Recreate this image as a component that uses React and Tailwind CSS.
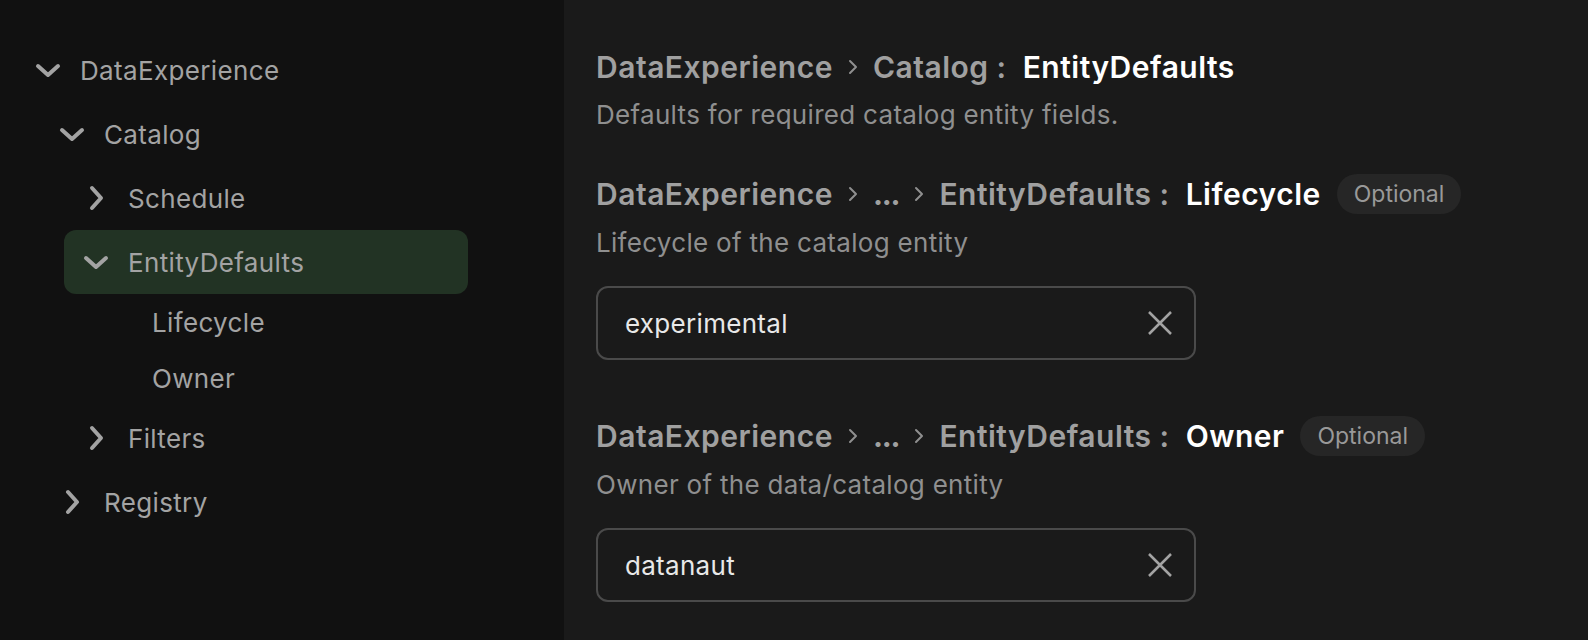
import React from 'react';

const ChevronDown = () => (
  <svg width="32" height="32" viewBox="0 0 32 32" fill="none" stroke="currentColor" strokeWidth="4" strokeLinecap="round" strokeLinejoin="round" className="shrink-0">
    <path d="M6 12 L16 21 L26 12" />
  </svg>
);

const ChevronRight = () => (
  <svg width="32" height="32" viewBox="0 0 32 32" fill="none" stroke="currentColor" strokeWidth="4" strokeLinecap="round" strokeLinejoin="round" className="shrink-0">
    <path d="M12 6 L21 16 L12 26" />
  </svg>
);

const Sep = () => (
  <svg width="40" height="32" viewBox="0 0 40 32" fill="none" stroke="#8f8f8f" strokeWidth="2" strokeLinecap="round" strokeLinejoin="round" className="shrink-0">
    <path d="M17 10 L23 16 L17 22" />
  </svg>
);

function Title({ name, parts, optional }) {
  return (
    <div className="flex items-center h-10 text-[30px] font-semibold tracking-[0.5px]">
      <span className="text-[#a0a0a0]">DataExperience</span>
      {parts.map((p) => (
        <React.Fragment key={p}>
          <Sep />
          <span className={p === '...' ? 'text-[#a0a0a0] font-bold tracking-[-1.2px]' : 'text-[#a0a0a0]'}>{p}</span>
        </React.Fragment>
      ))}
      <span className="text-[#a0a0a0] ml-2">:</span>
      <span className="text-white ml-4">{name}</span>
      {optional && (
        <span className="ml-4 h-10 px-[17px] flex items-center rounded-full bg-[#262626] text-[#999999] text-[23px] font-normal tracking-normal">
          Optional
        </span>
      )}
    </div>
  );
}

function Field({ value }) {
  return (
    <div className="mt-[27px] w-[600px] h-[74px] flex items-center justify-between pl-[27px] pr-[21px] rounded-xl border-2 border-[#4a4a4a] text-[26px] tracking-[0.3px] text-[#e8e8e8]">
      <span>{value}</span>
      <svg width="26" height="26" viewBox="0 0 26 26" fill="none" stroke="#a3a3a3" strokeWidth="2.5">
        <path d="M2 2 L24 24 M24 2 L2 24" />
      </svg>
    </div>
  );
}

export default function App() {
  return (
    <div className="flex w-[1588px] h-[640px] overflow-hidden bg-[#1a1a1a] text-[#a3a3a3] font-['Inter',sans-serif]">
      <div className="w-[564px] shrink-0 bg-[#111111] pt-[38px] text-[26px] tracking-[0.35px]">
        <div className="h-16 flex items-center gap-4 pl-8">
          <ChevronDown />
          <span>DataExperience</span>
        </div>
        <div className="h-16 flex items-center gap-4 pl-14">
          <ChevronDown />
          <span>Catalog</span>
        </div>
        <div className="h-16 flex items-center gap-4 pl-20">
          <ChevronRight />
          <span>Schedule</span>
        </div>
        <div className="h-16 ml-16 w-[404px] flex items-center gap-4 pl-4 rounded-xl bg-[#223324]">
          <ChevronDown />
          <span>EntityDefaults</span>
        </div>
        <div className="h-14 flex items-center pl-[152px]">Lifecycle</div>
        <div className="h-14 flex items-center pl-[152px]">Owner</div>
        <div className="h-16 flex items-center gap-4 pl-20">
          <ChevronRight />
          <span>Filters</span>
        </div>
        <div className="h-16 flex items-center gap-4 pl-14">
          <ChevronRight />
          <span>Registry</span>
        </div>
      </div>
      <div className="flex-1 pl-[32px] pt-[47px]">
        <Title name="EntityDefaults" parts={['Catalog']} />
        <p className="mt-[12px] text-[26px] tracking-[0.3px] text-[#8f8f8f] leading-8">Defaults for required catalog entity fields.</p>
        <div className="mt-[43px]">
          <Title name="Lifecycle" parts={['...', 'EntityDefaults']} optional />
          <p className="mt-[13px] text-[26px] tracking-[0.3px] text-[#8f8f8f] leading-8">Lifecycle of the catalog entity</p>
          <Field value="experimental" />
        </div>
        <div className="mt-[56px]">
          <Title name="Owner" parts={['...', 'EntityDefaults']} optional />
          <p className="mt-[13px] text-[26px] tracking-[0.3px] text-[#8f8f8f] leading-8">Owner of the data/catalog entity</p>
          <Field value="datanaut" />
        </div>
      </div>
    </div>
  );
}
